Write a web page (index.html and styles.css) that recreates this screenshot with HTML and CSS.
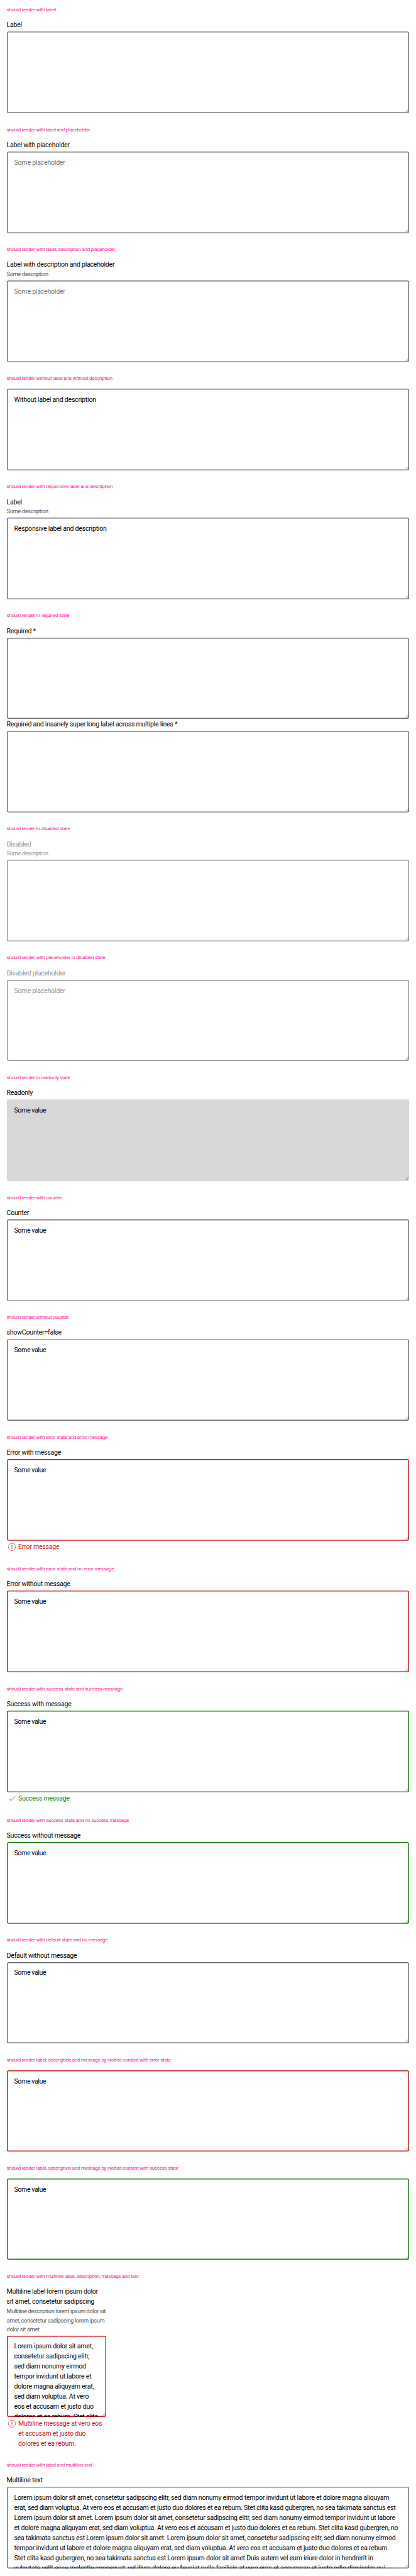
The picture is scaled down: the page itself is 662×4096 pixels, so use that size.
FILE: index.html
```html
<!DOCTYPE html>
<html lang="en">
<head>
<meta charset="utf-8">
<title>Textarea wrapper</title>
<link rel="stylesheet" href="styles.css">
</head>
<body>
<svg class="defs" width="0" height="0" aria-hidden="true">
  <symbol id="grip" viewBox="0 0 8 8"><path d="M.3 7.8 7.7.4M4.5 7.8 7.7 4.6" fill="none" stroke="#55565a" stroke-width=".9"/></symbol>
  <symbol id="error" viewBox="0 0 24 24"><circle cx="12" cy="12" r="8.5" fill="none" stroke="currentColor"/><path d="M11.1 7.2h1.8l-.3 6h-1.2zM11.2 14.9h1.6v1.7h-1.6z" fill="currentColor"/></symbol>
  <symbol id="check" viewBox="0 0 24 24"><path d="m5.2 12 5 4.6L19.8 6.6" fill="none" stroke="currentColor" stroke-width="1.2"/></symbol>
</svg>

<section class="case">
  <h4 class="title">should render with label</h4>
  <div class="label">Label</div>
  <div class="box"><svg class="grip"><use href="#grip"/></svg></div>
</section>

<section class="case">
  <h4 class="title">should render with label and placeholder</h4>
  <div class="label">Label with placeholder</div>
  <div class="box placeholder">Some placeholder<svg class="grip"><use href="#grip"/></svg></div>
</section>

<section class="case">
  <h4 class="title">should render with label, description and placeholder</h4>
  <div class="label">Label with description and placeholder</div>
  <div class="description">Some description</div>
  <div class="box placeholder">Some placeholder<svg class="grip"><use href="#grip"/></svg></div>
</section>

<section class="case">
  <h4 class="title">should render without label and without description</h4>
  <div class="box first">Without label and description<svg class="grip"><use href="#grip"/></svg></div>
</section>

<section class="case">
  <h4 class="title">should render with responsive label and description</h4>
  <div class="label">Label</div>
  <div class="description">Some description</div>
  <div class="box">Responsive label and description<svg class="grip"><use href="#grip"/></svg></div>
</section>

<section class="case">
  <h4 class="title">should render in required state</h4>
  <div class="label">Required *</div>
  <div class="box"><svg class="grip"><use href="#grip"/></svg></div>
  <div class="label">Required and insanely super long label across multiple lines *</div>
  <div class="box"><svg class="grip"><use href="#grip"/></svg></div>
</section>

<section class="case disabled">
  <h4 class="title">should render in disabled state</h4>
  <div class="label">Disabled</div>
  <div class="description">Some description</div>
  <div class="box"><svg class="grip"><use href="#grip"/></svg></div>
</section>

<section class="case disabled">
  <h4 class="title">should render with placeholder in disabled state</h4>
  <div class="label">Disabled placeholder</div>
  <div class="box placeholder">Some placeholder<svg class="grip"><use href="#grip"/></svg></div>
</section>

<section class="case">
  <h4 class="title">should render in readonly state</h4>
  <div class="label">Readonly</div>
  <div class="box readonly value">Some value<svg class="grip"><use href="#grip"/></svg></div>
</section>

<section class="case">
  <h4 class="title">should render with counter</h4>
  <div class="label">Counter</div>
  <div class="box value">Some value<svg class="grip"><use href="#grip"/></svg></div>
</section>

<section class="case">
  <h4 class="title">should render without counter</h4>
  <div class="label">showCounter=false</div>
  <div class="box value">Some value<svg class="grip"><use href="#grip"/></svg></div>
</section>

<section class="case error">
  <h4 class="title">should render with error state and error message</h4>
  <div class="label">Error with message</div>
  <div class="box value">Some value<svg class="grip"><use href="#grip"/></svg></div>
  <div class="message"><svg class="icon"><use href="#error"/></svg><span>Error message</span></div>
</section>

<section class="case error">
  <h4 class="title">should render with error state and no error message</h4>
  <div class="label">Error without message</div>
  <div class="box value">Some value<svg class="grip"><use href="#grip"/></svg></div>
</section>

<section class="case success">
  <h4 class="title">should render with success state and success message</h4>
  <div class="label">Success with message</div>
  <div class="box value">Some value<svg class="grip"><use href="#grip"/></svg></div>
  <div class="message"><svg class="icon"><use href="#check"/></svg><span>Success message</span></div>
</section>

<section class="case success">
  <h4 class="title">should render with success state and no success message</h4>
  <div class="label">Success without message</div>
  <div class="box value">Some value<svg class="grip"><use href="#grip"/></svg></div>
</section>

<section class="case">
  <h4 class="title">should render with default state and no message</h4>
  <div class="label">Default without message</div>
  <div class="box value">Some value<svg class="grip"><use href="#grip"/></svg></div>
</section>

<section class="case error">
  <h4 class="title">should render label, description and message by slotted content with error state</h4>
  <div class="box first value">Some value<svg class="grip"><use href="#grip"/></svg></div>
</section>

<section class="case success">
  <h4 class="title">should render label, description and message by slotted content with success state</h4>
  <div class="box first value">Some value<svg class="grip"><use href="#grip"/></svg></div>
</section>

<section class="case error narrow">
  <h4 class="title">should render with multiline label, description, message and text</h4>
  <div class="label">Multiline label lorem ipsum dolor<br>sit amet, consetetur sadipscing</div>
  <div class="description">Multiline description lorem ipsum dolor sit<br>amet, consetetur sadipscing lorem ipsum<br>dolor sit amet</div>
  <div class="box">Lorem ipsum dolor sit amet,<br>consetetur sadipscing elitr,<br>sed diam nonumy eirmod<br>tempor invidunt ut labore et<br>dolore magna aliquyam erat,<br>sed diam voluptua. At vero<br>eos et accusam et justo duo<br>dolores et ea rebum. Stet clita<svg class="grip"><use href="#grip"/></svg></div>
  <div class="message"><svg class="icon"><use href="#error"/></svg><span>Multiline message at vero eos<br>et accusam et justo duo<br>dolores et ea rebum.</span></div>
</section>

<section class="case">
  <h4 class="title">should render with label and multiline text</h4>
  <div class="label">Multiline text</div>
  <div class="box">Lorem ipsum dolor sit amet, consetetur sadipscing elitr, sed diam nonumy eirmod tempor invidunt ut labore et dolore magna aliquyam<br>erat, sed diam voluptua. At vero eos et accusam et justo duo dolores et ea rebum. Stet clita kasd gubergren, no sea takimata sanctus est<br>Lorem ipsum dolor sit amet. Lorem ipsum dolor sit amet, consetetur sadipscing elitr, sed diam nonumy eirmod tempor invidunt ut labore<br>et dolore magna aliquyam erat, sed diam voluptua. At vero eos et accusam et justo duo dolores et ea rebum. Stet clita kasd gubergren, no<br>sea takimata sanctus est Lorem ipsum dolor sit amet. Lorem ipsum dolor sit amet, consetetur sadipscing elitr, sed diam nonumy eirmod<br>tempor invidunt ut labore et dolore magna aliquyam erat, sed diam voluptua. At vero eos et accusam et justo duo dolores et ea rebum.<br>Stet clita kasd gubergren, no sea takimata sanctus est Lorem ipsum dolor sit amet.Duis autem vel eum iriure dolor in hendrerit in<br>vulputate velit esse molestie consequat, vel illum dolore eu feugiat nulla facilisis at vero eros et accumsan et iusto odio dignissim qui<svg class="grip"><use href="#grip"/></svg></div>
</section>
</body>
</html>
```

FILE: styles.css
```css
/* 1rem = 10 design units */
html {
  font-size: 6.62px;
}

body {
  margin: 0;
  padding: 0 1.6rem 1.6rem;
  background: #fff;
  color: #010205;
  font-family: Roboto, "Liberation Sans", sans-serif;
  white-space: nowrap;
  overflow: hidden;
}

.defs {
  position: absolute;
}

.case {
  --line: #6b6d70;
  padding-top: 3.2rem;
}

.case:first-of-type {
  padding-top: 1.6rem;
}

.title {
  margin: 0 0 1.52rem;
  padding-top: 0.08rem;
  color: #ff1493;
  font-size: 1.2rem;
  font-weight: 400;
  line-height: 1.6rem;
  letter-spacing: -0.036rem;
}

.label {
  margin-bottom: -0.08rem;
  padding-top: 0.08rem;
  font-size: 1.6rem;
  line-height: 2.4rem;
  letter-spacing: -0.037rem;
}

.description {
  margin-bottom: -0.08rem;
  padding-top: 0.08rem;
  color: #535457;
  font-size: 1.4rem;
  line-height: 2.18rem;
  letter-spacing: -0.055rem;
}

.box {
  position: relative;
  box-sizing: border-box;
  height: 19.6rem;
  margin-top: 0.4rem;
  padding: 1.5rem 1.8rem 0;
  border-radius: 0.4rem;
  box-shadow: inset 0 0 0 0.21rem var(--line);
  font-size: 1.6rem;
  line-height: 2.4rem;
  letter-spacing: -0.035rem;
  overflow: hidden;
  /* keeps the last, cut-off line inside the frame */
  clip-path: inset(0 round 0.4rem);
}

.box.first {
  margin-top: 0;
}

.box.value {
  letter-spacing: -0.06rem;
}

.box.placeholder {
  color: #77787b;
}

.box.readonly {
  background: #d8d8da;
  box-shadow: none;
}

.grip {
  position: absolute;
  right: 0.25rem;
  bottom: 0.25rem;
  width: 0.8rem;
  height: 0.8rem;
}

.message {
  display: flex;
  gap: 0.4rem;
  margin-top: 0.4rem;
  color: var(--line);
  font-size: 1.6rem;
  line-height: 2.4rem;
  letter-spacing: -0.037rem;
}

.icon {
  flex: none;
  width: 2.4rem;
  height: 2.4rem;
}

.disabled {
  --line: #949598;
}

.disabled .label,
.disabled .description,
.disabled .box {
  color: #949598;
}

.error {
  --line: #cc1922;
}

.success {
  --line: #197e10;
}

.narrow .box {
  width: 24rem;
}
```
